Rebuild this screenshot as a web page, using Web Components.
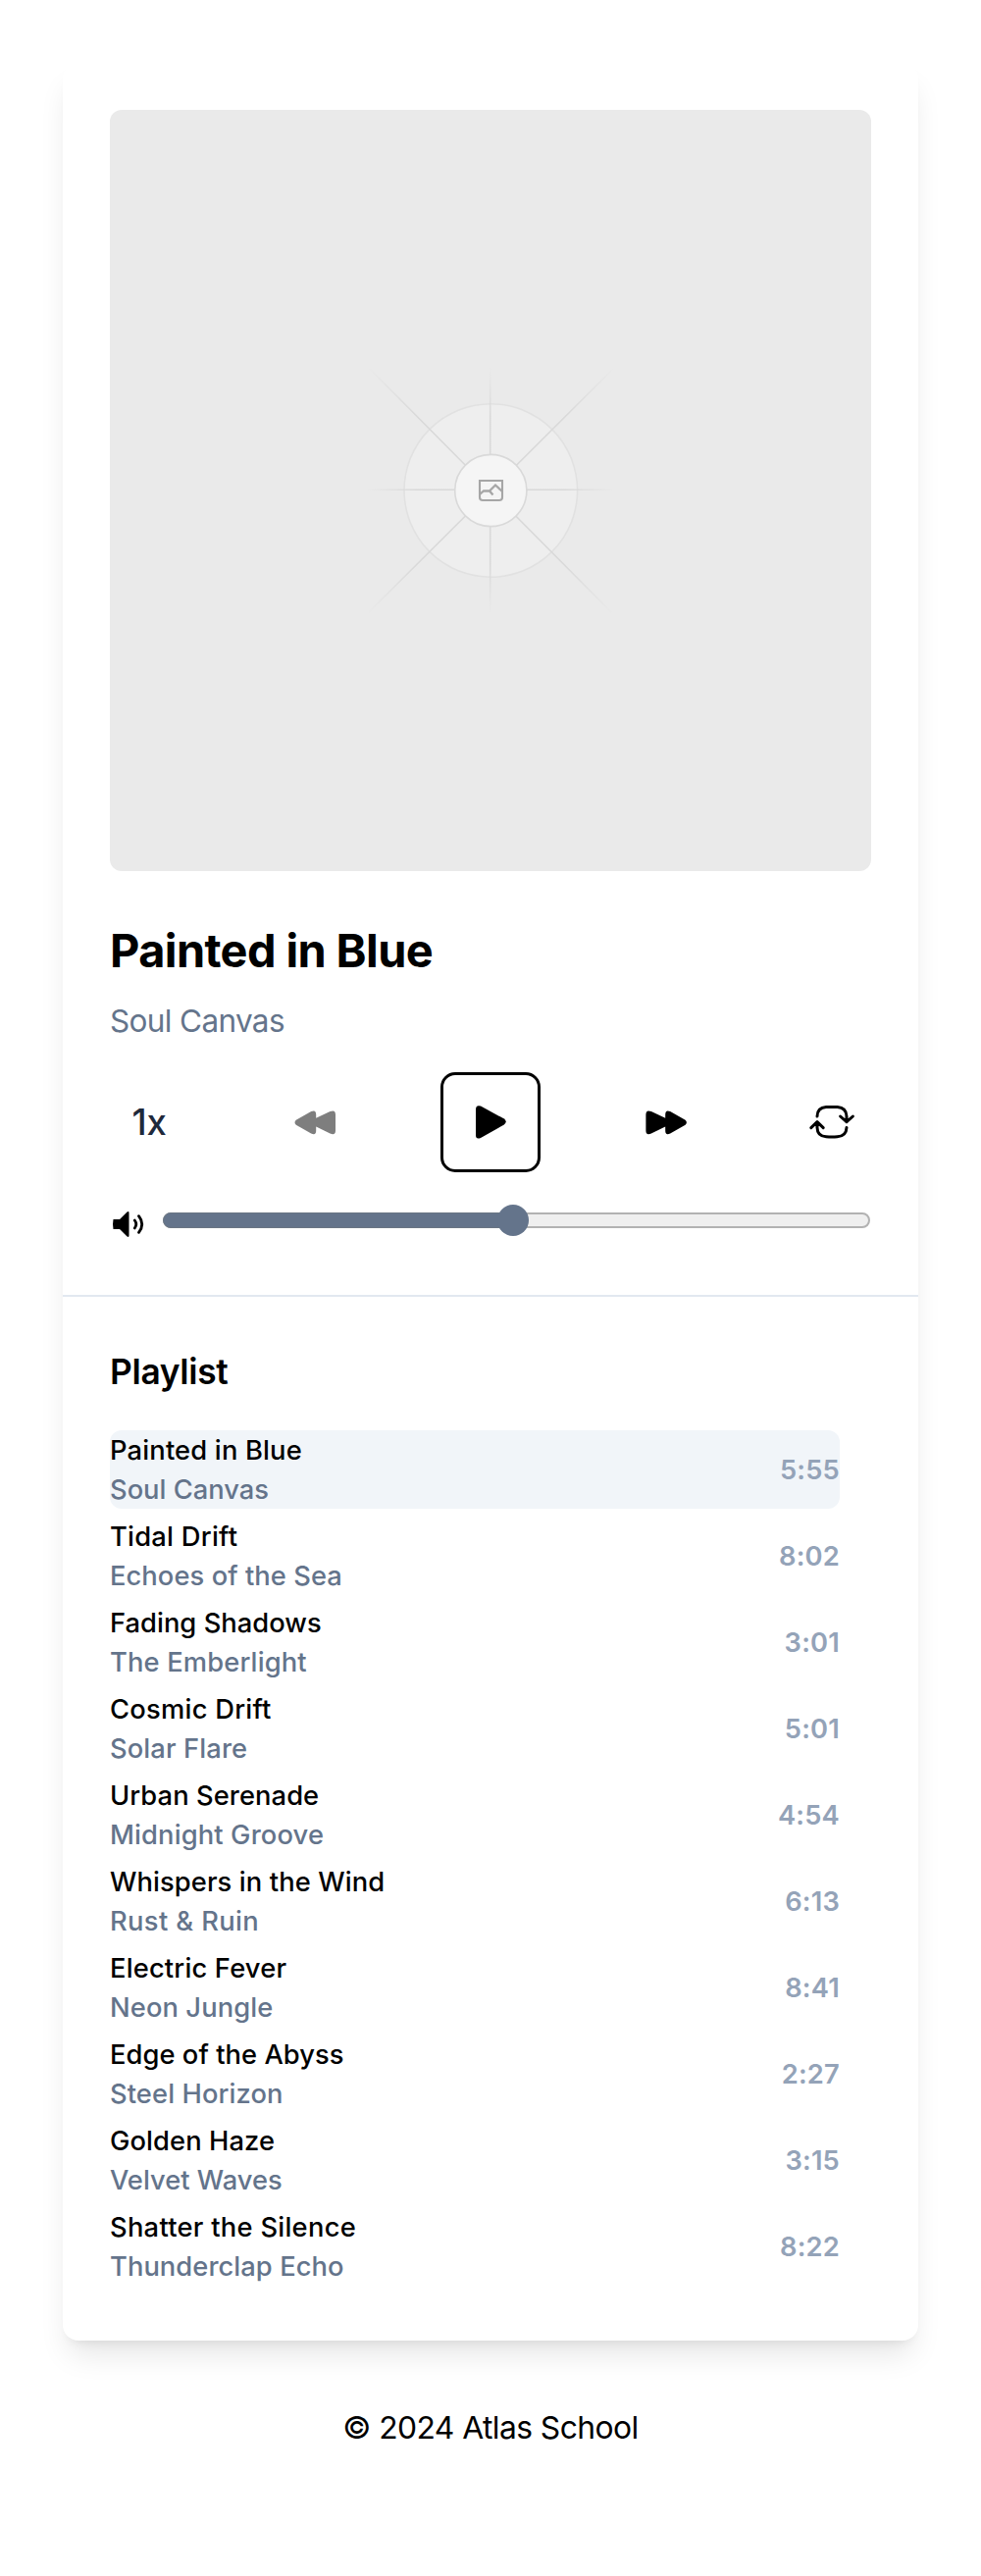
<!DOCTYPE html>
<html lang="en"><head><meta charset="utf-8"><title>Music Player</title>
<style>
body{margin:0;background:#fff;font-family:Inter,"Liberation Sans",sans-serif;color:#000}
</style></head><body>
<music-player></music-player>
<script>
const def=(name,html,init)=>customElements.define(name,class extends HTMLElement{
  constructor(){super();this.attachShadow({mode:'open'}).innerHTML=html;}
  connectedCallback(){if(init)init(this,this.shadowRoot);}
});

def('cover-art',`<style>:host{display:block;width:776px;height:776px;border-radius:12px;overflow:hidden;background:#eaeaea}svg{display:block}</style>
<svg width="776" height="776" viewBox="112 112 776 776" fill="none">
<defs>
<radialGradient id="ray" gradientUnits="userSpaceOnUse" cx="500" cy="500" r="126"><stop offset=".6" stop-color="#d9d9d9"/><stop offset="1" stop-color="#d9d9d9" stop-opacity="0"/></radialGradient>
<radialGradient id="diag" gradientUnits="userSpaceOnUse" cx="500" cy="500" r="178"><stop offset=".6" stop-color="#d9d9d9"/><stop offset="1" stop-color="#d9d9d9" stop-opacity="0"/></radialGradient>
</defs>
<circle cx="500.3" cy="500" r="88.3" fill="#eeeeee" stroke="#e1e1e1" stroke-width="1.6"/>
<path d="M499.7 374V626M374 499.2H626" stroke="url(#ray)" stroke-width="1.6"/>
<path d="M376 375L624 625M374 626L626 375" stroke="url(#diag)" stroke-width="1.6"/>
<circle cx="500.3" cy="500" r="36.6" fill="#f5f5f5" stroke="#d9d9d9" stroke-width="1.6"/>
<path d="M489 490H512V507Q512 510 509 510H492Q489 510 489 507Z" stroke="#a6a6a6" stroke-width="2.1"/>
<path d="M489 504L493 500.500H499L502.5 504.500M499 500.500L505 494.500L512 501" stroke="#a6a6a6" stroke-width="2.300"/>
</svg>`);

def('track-heading',`<style>:host{display:block;padding-top:49px}
h1{margin:0;font-size:46.9px;line-height:64px;font-weight:700;letter-spacing:-.6px}
p{margin:16px 0 0;font-size:31.5px;line-height:48px;color:#64748b;letter-spacing:-.64px}</style>
<h1><slot name="title"></slot></h1><p><slot name="artist"></slot></p>`);

def('player-controls',`<style>:host{display:flex;justify-content:space-between;align-items:center;margin-top:28px;height:102px}
button{all:unset;box-sizing:border-box;display:flex;align-items:center;justify-content:center;width:80px;height:80px}
.skip{width:88px}.play{width:102px;height:102px;border:3px solid #000;border-radius:15px}.dim{opacity:.5}
.speed{font-size:36.500px;font-weight:500;color:#1e293b;letter-spacing:-.3px}svg{display:block}</style>
<button class="speed">1x</button>
<button class="skip dim"><svg width="48" height="32" viewBox="0 0 48 32"><path d="M4.800 13.800L20.200 5.100Q25.200 2.700 25.200 8.400V11.800L39.500 5.100Q45 2.700 45 8.400V24.400Q45 29.900 39.500 27.500L25.200 20.400V24.400Q25.200 29.900 20.200 27.500L4.800 18.800Q2.200 16.300 4.800 13.800Z"/></svg></button>
<button class="play"><svg width="48" height="48" viewBox="0 0 48 48"><path d="M9 11Q9 6 14 7.600L37.500 20.300Q42 23.500 37.500 26.700L14 39.900Q9 42 9 37Z"/></svg></button>
<button class="skip"><svg width="48" height="32" viewBox="0 0 48 32"><path transform="matrix(-1 0 0 1 47.400 0)" d="M4.800 13.800L20.200 5.100Q25.200 2.700 25.200 8.400V11.800L39.500 5.100Q45 2.700 45 8.400V24.400Q45 29.900 39.500 27.500L25.200 20.400V24.400Q25.200 29.900 20.200 27.500L4.800 18.800Q2.200 16.300 4.800 13.800Z"/></svg></button>
<button><svg width="48" height="48" viewBox="0 0 48 48" fill="none" stroke="#000" stroke-width="3" stroke-linecap="round" stroke-linejoin="round"><path d="M9 18Q9.200 9.200 18.100 8.600Q24 8.200 29.600 8.600Q38.600 9.200 39 18V23.700M32.600 18L39 23.700L45.400 18M39 29.500Q38.600 38.300 29.600 38.700Q24 39.100 18.100 38.700Q9.200 38.300 9 29.500V23.700M2.800 29.700L9 23.700L15.200 29.700"/></svg></button>`);

def('volume-slider',`<style>:host{display:flex;align-items:center;margin-top:33px;height:32px}
svg{display:block;flex:none;margin:8px 18px 0 0}
.track{box-sizing:border-box;flex:none;width:721px;height:16px;border:2px solid #b2b2b2;border-radius:8px;background:#efefef;display:flex;align-items:center}
.fill{box-sizing:border-box;flex:none;width:357px;height:16px;margin-left:-2px;border:1px solid #6b7684;border-radius:8px 0 0 8px;background:#64748b}
.thumb{flex:none;width:32px;height:32px;margin-left:-16px;border-radius:50%;background:#64748b}</style>
<svg width="36" height="32" viewBox="0 0 36 32"><path d="M3.500 11H10L17.300 3.800Q19.500 2 19.500 4.500V27.500Q19.500 30 17.300 28.200L10 21H3.500Q2.500 16 3.500 11Z"/><path d="M25.300 12Q28.300 16 25.300 20M29.500 7.700Q36 16 29.500 24.300" fill="none" stroke="#000" stroke-width="2.800" stroke-linecap="round"/></svg>
<div class="track"><div class="fill"></div><div class="thumb"></div></div>`);

def('track-item',`<style>:host{display:flex;align-items:center;justify-content:space-between;box-sizing:border-box;height:80px;padding-top:1px;border-radius:12px;font-size:27.3px;line-height:40px;font-weight:500}
:host([active]){background:#f1f5f9}
.artist{color:#64748b}.time{color:#94a3b8;font-weight:600;letter-spacing:.2px}</style>
<div><div class="title"></div><div class="artist"></div></div><div class="time"></div>`,(el,r)=>{
  for(const k of ['title','artist','time']) r.querySelector('.'+k).textContent=el.dataset[k];
  r.querySelector('.title').style.letterSpacing=el.dataset.titleTracking+'px';
  r.querySelector('.artist').style.letterSpacing=el.dataset.artistTracking+'px';
});

def('play-list',`<style>:host{display:block;border-top:2px solid #e2e8f0;padding:53px 48px 0}
h2{margin:0 0 35px;font-size:35.300px;line-height:48px;font-weight:600;letter-spacing:-.3px}
.rows{display:flex;flex-direction:column;gap:8px;width:744px}</style><h2>Playlist</h2><div class="rows"></div>`,(el,r)=>{
  const tracks=[['Painted in Blue','Soul Canvas','5:55',.18,0],['Tidal Drift','Echoes of the Sea','8:02',.26,.07],['Fading Shadows','The Emberlight','3:01',.04,.16],['Cosmic Drift','Solar Flare','5:01',.26,.12],['Urban Serenade','Midnight Groove','4:54',.08,.14],['Whispers in the Wind','Rust & Ruin','6:13',.11,.38],['Electric Fever','Neon Jungle','8:41',.18,.1],['Edge of the Abyss','Steel Horizon','2:27',.06,.1],['Golden Haze','Velvet Waves','3:15',.1,0],['Shatter the Silence','Thunderclap Echo','8:22',.28,.07]];
  tracks.forEach(([title,artist,time,titleTracking,artistTracking],i)=>{
    const t=document.createElement('track-item');
    Object.assign(t.dataset,{title,artist,time,titleTracking,artistTracking});
    t.toggleAttribute('active',i===0);
    r.querySelector('.rows').append(t);
  });
});

def('music-player',`<style>:host{display:block;padding:64px 64px 0}
main{box-sizing:border-box;height:2322px;border-radius:16px;background:#fff;box-shadow:0 20px 30px -6px rgba(0,0,0,.1),0 8px 12px -8px rgba(0,0,0,.1)}
.now{box-sizing:border-box;height:1256px;padding:48px 48px 0}
footer{margin-top:65px;text-align:center;font-size:31.800px;line-height:48px;letter-spacing:-.56px}</style>
<main><div class="now"><cover-art></cover-art>
<track-heading><span slot="title">Painted in Blue</span><span slot="artist">Soul Canvas</span></track-heading>
<player-controls></player-controls><volume-slider></volume-slider></div>
<play-list></play-list></main><footer>© 2024 Atlas School</footer>`);
</script></body></html>
